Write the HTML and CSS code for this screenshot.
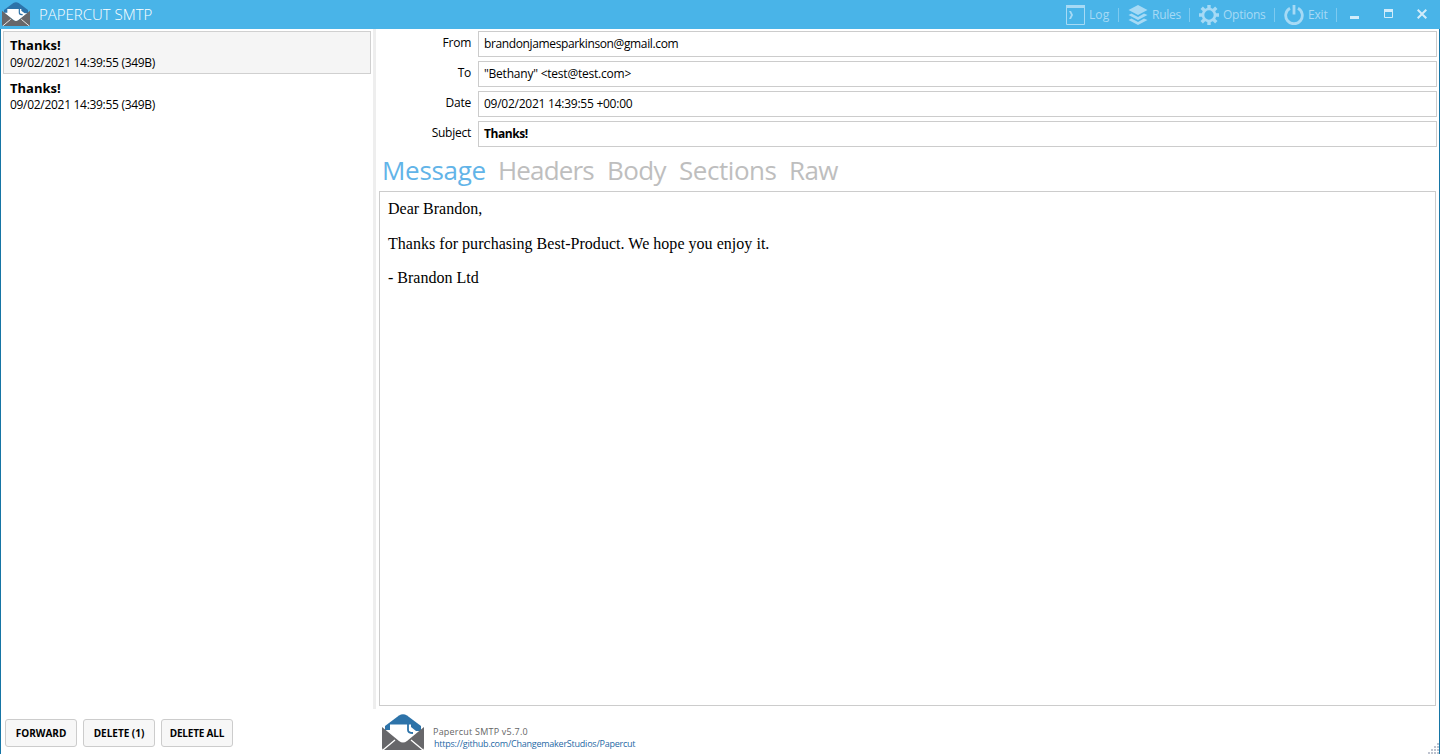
FILE: index.html
```html
<!DOCTYPE html>
<html lang="en">
<head>
<meta charset="utf-8">
<title>Papercut SMTP</title>
<link rel="stylesheet" href="styles.css">
</head>
<body>
<svg class="defs" width="0" height="0">
  <symbol id="logo" viewBox="0 0 42 36">
    <path fill="#2d73a9" d="M3 12 17 1.5Q21-1 25 1.5L39 12V17H3z"/>
    <path fill="#fff" d="M8 10.500H29V13L34 17H39L22 29H20L3 16H8z"/>
    <path fill="none" stroke="#2d73a9" stroke-width="1.800" d="M26 10V16Q26 19 31 19"/>
    <path fill="#67676a" d="M0 13 17 27Q21 30 25 27L42 13V34Q42 36 40 36H2Q0 36 0 34z"/>
    <path stroke="#fff" stroke-width="1.3" fill="none" d="M13 26 1 36M29 26 41 36"/>
  </symbol>
</svg>
<div class="window">
  <header class="titlebar">
    <svg class="title-logo"><use href="#logo"/></svg>
    <h1 class="title">PAPERCUT SMTP</h1>
    <nav class="commands">
      <button class="command log"><svg width="20" height="20" viewBox="0 0 20 20"><path fill="none" stroke="currentColor" d="M1.5.5h18v19h-18z"/><path fill="currentColor" d="M1 0h19v3H1zM4 6h2l2 4-2 4H4l2-4z"/></svg><span>Log</span></button>
      <button class="command rules"><svg width="20" height="20" viewBox="0 0 20 20"><path fill="currentColor" d="M10 0 19.500 5 10 10 .5 5zM3.5 8.5 10 12l6-3.5 3.500 1.500-9.500 5-9.500-5zM3.500 13.500 10 17l6-3.500 3.500 1.500-9.500 5-9.500-5z"/></svg><span>Rules</span></button>
      <button class="command options"><svg width="20" height="20" viewBox="0 0 20 20"><circle cx="10" cy="10" r="6" fill="none" stroke="currentColor" stroke-width="2.600"/><path stroke="currentColor" stroke-width="3.400" d="M10 4V0M10 16V20M4 10H0M16 10H20M5.400 5.400 2.700 2.700M14.600 5.400 17.300 2.700M5.400 14.600 2.700 17.300M14.600 14.600 17.300 17.300"/></svg><span>Options</span></button>
      <button class="command exit"><svg width="20" height="20" viewBox="0 0 20 20"><path fill="none" stroke="currentColor" stroke-width="2.800" d="M6 3.200A8.300 8.300 0 1 0 14 3.200M10 0V9.500"/></svg><span>Exit</span></button>
    </nav>
    <div class="caption-buttons">
      <svg width="9" height="12"><path fill="currentColor" d="M0 7h9v3H0z"/></svg>
      <svg width="9" height="9"><path fill="none" stroke="currentColor" d="M.5.5h8v8h-8z"/><path fill="currentColor" d="M0 0h9v3H0z"/></svg>
      <svg width="10" height="10"><path stroke="currentColor" stroke-width="2" d="m.7.700 8.600 8.600M9.300.700.700 9.300"/></svg>
    </div>
  </header>
  <main class="workspace">
    <aside class="sidebar">
      <ul class="messages">
        <li class="message selected"><strong>Thanks!</strong><span>09/02/2021 14:39:55 (349B)</span></li>
        <li class="message"><strong>Thanks!</strong><span>09/02/2021 14:39:55 (349B)</span></li>
      </ul>
      <div class="actions">
        <button class="action forward">FORWARD</button>
        <button class="action delete">DELETE (1)</button>
        <button class="action delete-all">DELETE ALL</button>
      </div>
    </aside>
    <div class="splitter"></div>
    <section class="detail">
      <div class="fields">
        <span class="label">From</span><div class="field"><span class="from">brandonjamesparkinson@gmail.com</span></div>
        <span class="label">To</span><div class="field"><span class="to">"Bethany" &lt;test@test.com&gt;</span></div>
        <span class="label">Date</span><div class="field"><span class="date">09/02/2021 14:39:55 +00:00</span></div>
        <span class="label">Subject</span><div class="field"><strong class="subject">Thanks!</strong></div>
      </div>
      <nav class="tabs">
        <span class="tab active">Message</span><span class="tab headers">Headers</span><span class="tab body-tab">Body</span><span class="tab sections">Sections</span><span class="tab raw">Raw</span>
      </nav>
      <article class="content">
        <p>Dear Brandon,</p>
        <p class="thanks">Thanks for purchasing Best-Product. We hope you enjoy it.</p>
        <p>- Brandon Ltd</p>
      </article>
      <footer class="footer">
        <svg class="footer-logo"><use href="#logo"/></svg>
        <div class="about"><span class="version">Papercut SMTP v5.7.0</span><a class="link">https://github.com/ChangemakerStudios/Papercut</a></div>
        <svg class="grip" width="11" height="11"><path fill="#bfc4d0" d="M9 0h2v2H9zM6 3h2v2H6zM9 3h2v2H9zM3 6h2v2H3zM6 6h2v2H6zM9 6h2v2H9zM0 9h2v2H0zM3 9h2v2H3zM6 9h2v2H6zM9 9h2v2H9z"/></svg>
      </footer>
    </section>
  </main>
</div>
</body>
</html>
```
FILE: styles.css
```css
* { box-sizing: border-box; }
body { margin: 0; font: 12px/16px "Open Sans", "Noto Sans", sans-serif; color: #000; background: #fff; overflow: hidden; }
button { font: inherit; padding: 0; border: 0; background: none; }
.defs { display: block; height: 0; }
.window { height: 754px; display: flex; flex-direction: column; white-space: nowrap; }
.titlebar { height: 29px; flex: none; display: flex; align-items: center; background: #49b4e8; }
.title-logo { width: 28px; height: 24px; margin: 0 0 2px 2px; }
.title { margin: -2px 0 0 9px; font-size: 15px; line-height: 20px; font-weight: 300; color: #fff; }
.commands { display: flex; margin-left: auto; height: 29px; align-items: center; }
.command { display: flex; align-items: center; height: 14px; color: #a6daf5; border-right: 1px solid #7dcaf0; font-size: 12px; }
.command svg { flex: none; margin-right: 4px; }
.command span { padding-top: 1px; }
.log { width: 54px; }
.log span { letter-spacing: .1px; }
.rules { width: 71px; padding-left: 9px; }
.rules span { letter-spacing: -.25px; }
.options { width: 85px; padding-left: 9px; }
.options span { letter-spacing: -.25px; }
.exit { width: 62px; padding-left: 9px; }
.exit span { letter-spacing: -.2px; }
.caption-buttons { width: 103px; padding: 9px 13px 0 13px; height: 29px; display: flex; justify-content: space-between; align-items: flex-start; color: #d2ecfa; }
.workspace { flex: 1; min-height: 0; display: flex; border: solid #1675a5; border-width: 0 1px; }
.sidebar { width: 372px; padding: 2px 2px 7px; display: flex; flex-direction: column; }
.messages { flex: 1; margin: 0; padding: 0; list-style: none; }
.message { height: 43px; padding: 5px 6px 0; border: 1px solid transparent; display: flex; flex-direction: column; }
.message.selected { background: #f5f5f5; border-color: #d0d0d0; }
.message strong { font-size: 13px; line-height: 17px; }
.message.selected span { padding-top: 1px; }
.message span { letter-spacing: -.3px; }
.actions { display: flex; gap: 6px; padding-left: 2px; }
.action { width: 72px; height: 28px; border: 1px solid #ccc; border-radius: 3px; background: #f7f7f7; font-size: 10px; font-weight: 700; }
.delete-all { letter-spacing: -.2px; }
.splitter { width: 3px; height: 680px; background: #eee; }
.detail { flex: 1; display: flex; flex-direction: column; padding: 2px 2px 0 3px; }
.fields { display: grid; grid-template-columns: 92px 1fr; grid-auto-rows: 26px; gap: 4px 7px; }
.label { text-align: right; padding-top: 4px; letter-spacing: -.25px; }
.field { border: 1px solid #ccc; padding: 4px 5px; }
.from { letter-spacing: -.37px; }
.to { letter-spacing: -.22px; }
.date { letter-spacing: -.25px; }
.subject { letter-spacing: -.45px; }
.tabs { height: 44px; display: flex; padding: 5px 0 0 3px; font-size: 26px; line-height: 36px; color: #bebebe; }
.tab { width: 110px; letter-spacing: -.6px; }
.active { width: 116px; color: #62b4e8; letter-spacing: -.3px; }
.headers { width: 109px; letter-spacing: -.85px; }
.body-tab { width: 72px; }
.sections { letter-spacing: -.45px; }
.content { flex: 1; margin-right: 1px; padding: 8px; border: 1px solid #ccc; font: 16px/18px "Liberation Serif", serif; }
.content p { margin: 0 0 16.500px; }
.content .thanks { letter-spacing: .03px; }
.footer { height: 48px; display: flex; }
.footer-logo { width: 42px; height: 36px; margin: 8px 0 0 3px; }
.about { display: flex; flex-direction: column; padding: 20px 0 0 9px; font-size: 9px; line-height: 12px; color: #666; }
.version { letter-spacing: .22px; }
.link { color: #1f69a5; letter-spacing: -.23px; padding-left: 1px; }
.grip { margin: 37px -2px 0 auto; }
```
